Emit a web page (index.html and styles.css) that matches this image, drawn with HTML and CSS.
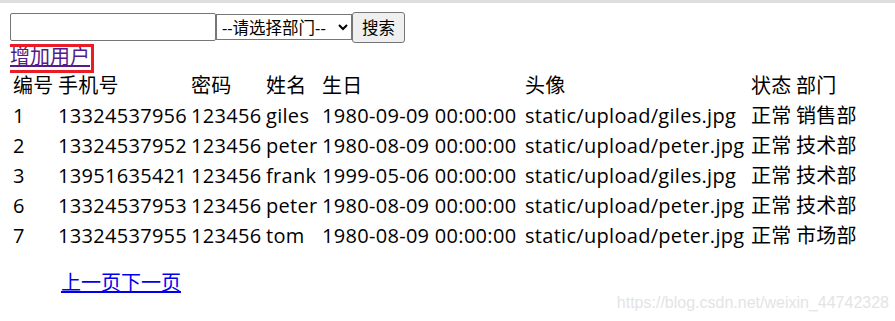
FILE: index.html
```html
<!DOCTYPE html>
<html lang="zh-CN">
<head>
    <meta charset="UTF-8">
    <meta name="viewport" content="width=device-width, initial-scale=1.0">
    <title>用户列表</title>
    <link rel="stylesheet" href="styles.css">
</head>
<body>

    <form class="search">
        <input type="text" class="keyword"><select class="dept">
            <option>--请选择部门--</option>
            <option>销售部</option>
            <option>技术部</option>
            <option>市场部</option>
        </select><button type="button" class="btn">搜索</button>
    </form>

    <div class="add-line">
        <a href="#" class="add-link">增加用户</a>
    </div>

    <table class="users">
        <tr class="head">
            <td class="c-id">编号</td>
            <td class="c-phone">手机号</td>
            <td class="c-pwd">密码</td>
            <td class="c-name">姓名</td>
            <td class="c-birth">生日</td>
            <td class="c-avatar">头像</td>
            <td class="c-state">状态</td>
            <td class="c-dept">部门</td>
        </tr>
        <tr>
            <td>1</td><td>13324537956</td><td>123456</td><td>giles</td>
            <td>1980-09-09 00:00:00</td><td>static/upload/giles.jpg</td><td>正常</td><td>销售部</td>
        </tr>
        <tr>
            <td>2</td><td>13324537952</td><td>123456</td><td>peter</td>
            <td>1980-08-09 00:00:00</td><td>static/upload/peter.jpg</td><td>正常</td><td>技术部</td>
        </tr>
        <tr>
            <td>3</td><td>13951635421</td><td>123456</td><td>frank</td>
            <td>1999-05-06 00:00:00</td><td>static/upload/giles.jpg</td><td>正常</td><td>技术部</td>
        </tr>
        <tr>
            <td>6</td><td>13324537953</td><td>123456</td><td>peter</td>
            <td>1980-08-09 00:00:00</td><td>static/upload/peter.jpg</td><td>正常</td><td>技术部</td>
        </tr>
        <tr>
            <td>7</td><td>13324537955</td><td>123456</td><td>tom</td>
            <td>1980-08-09 00:00:00</td><td>static/upload/peter.jpg</td><td>正常</td><td>市场部</td>
        </tr>
    </table>

    <div class="pager">
        <a href="#" class="page-link">上一页</a><a href="#" class="page-link">下一页</a>
    </div>

    <div class="watermark">https://blog.csdn.net/weixin_44742328</div>

</body>
</html>
```

FILE: styles.css
```css
:root{
    --font-main: "Open Sans", "Noto Sans CJK SC", sans-serif;
}

html{
    border-top: 3px solid #dedede;
}

body{
    margin: 7px 10px 10px;
    font-family: var(--font-main);
    font-size: 20px;
    color: #000;
}

.search{
    display: flex;
    align-items: center;
    height: 34px;
    margin: 0;
}

.search input,
.search select,
.search button{
    font-family: var(--font-main);
    font-size: 16.5px;
    margin: 0;
}

.keyword{
    box-sizing: border-box;
    width: 206px;
    height: 28px;
    border: 1px solid #767676;
    border-radius: 2px;
    padding: 1px 3px;
}

.dept{
    box-sizing: border-box;
    width: 136px;
    height: 26px;
    border: 1px solid #767676;
    border-radius: 0;
    padding: 0 1px;
    background: #fff;
    color: #000;
}

.btn{
    box-sizing: border-box;
    width: 53px;
    height: 31px;
    border: 1px solid #767676;
    border-radius: 3px;
    background: #efefef;
    color: #000;
    padding: 0 6px;
}

.add-line{
    display: flex;
    align-items: flex-start;
    height: 23px;
    padding-top: 3px;
}

/* red marker box around the link */
.add-link{
    display: inline-block;
    line-height: 20px;
    padding: 0 1px 3px 0;
    color: #551a8b;
    outline: 3px solid #ec1c24;
    outline-offset: 0;
}

.users{
    table-layout: fixed;
    width: 849px;
    border-spacing: 2px;
    white-space: nowrap;
}

.users td{
    padding: 1px;
    line-height: 26px;
    letter-spacing: 0.3px;
    box-sizing: border-box;
}

.c-id{ width: 43px; }
.c-phone{ width: 131px; }
.c-pwd{ width: 73px; }
.c-name{ width: 54px; }
.c-birth{ width: 201px; }
.c-avatar{ width: 224px; }
.c-state{ width: 43px; }
.c-dept{ width: 62px; }

.pager{
    margin-top: 16px;
    padding-left: 51px;
    line-height: 30px;
}

.page-link{
    color: #0000ee;
}

.watermark{
    position: absolute;
    right: 6px;
    bottom: 9px;
    font-family: "Liberation Sans", Arial, sans-serif;
    font-size: 16px;
    color: #e4e4e4;
}
```
